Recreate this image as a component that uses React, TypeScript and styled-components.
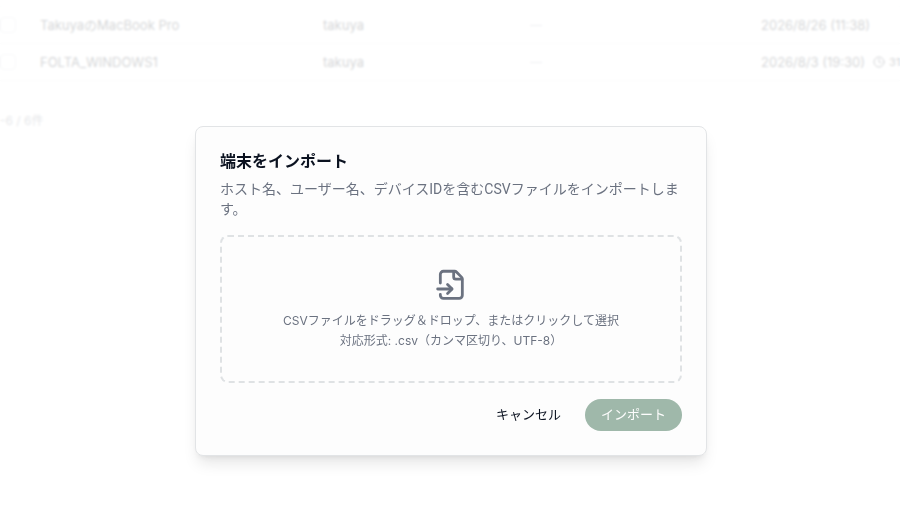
import { useState } from "react";
import styled, { createGlobalStyle } from "styled-components";
import { Clock } from "lucide-react";

const GlobalStyle = createGlobalStyle`
  * {
    box-sizing: border-box;
  }

  body {
    margin: 0;
    background: #ffffff;
    color: #0b1220;
    font-family: Inter, "Noto Sans CJK JP", sans-serif;
    font-size: 13px;
    line-height: 20px;
    overflow: hidden;
  }
`;

const Page = styled.main`
  min-height: 100vh;
  padding-top: 6px;
`;

const DeviceTable = styled.table`
  width: 100%;
  table-layout: fixed;
  border-collapse: collapse;
  border-top: 1px solid #f3f4f6;
`;

const Row = styled.tr`
  height: 37px;
  border-bottom: 1px solid #e5e7eb;
`;

const Cell = styled.td<{ $width?: string; $muted?: boolean }>`
  width: ${({ $width }) => $width || "auto"};
  padding: 0;
  color: ${({ $muted }) => ($muted ? "#9ca3af" : "inherit")};
  font-size: ${({ $muted }) => ($muted ? "12px" : "inherit")};
  white-space: nowrap;
`;

const Check = styled.input`
  display: block;
  appearance: none;
  width: 16px;
  height: 16px;
  margin: 0;
  border: 1px solid #d1d5db;
  border-radius: 4px;
`;

const Seen = styled.div`
  display: flex;
  align-items: center;
  gap: 8px;
`;

const Ago = styled.span`
  display: flex;
  align-items: center;
  gap: 4px;
  font-size: 11px;
`;

const Pager = styled.p`
  margin: 30px 0 0;
  color: #6b7280;
  font-size: 12px;
`;

const Overlay = styled.div`
  position: fixed;
  inset: 0;
  display: flex;
  justify-content: center;
  align-items: flex-start;
  padding: 126px 14px 16px 16px;
  background: rgba(255, 255, 255, 0.82);
  backdrop-filter: blur(0.8px);
`;

const Dialog = styled.section`
  width: 100%;
  max-width: 512px;
  padding: 24px;
  background: #fdfdfd;
  border: 1px solid #e2e4e6;
  border-radius: 8px;
  box-shadow:
    0 10px 15px -3px rgba(0, 0, 0, 0.1),
    0 4px 6px -4px rgba(0, 0, 0, 0.1);
`;

const Title = styled.h2`
  margin: 0 0 8px;
  font-size: 16px;
  font-weight: 600;
  line-height: 20px;
`;

const Description = styled.p`
  margin: 0 0 16px;
  color: #6b7280;
  font-family: Roboto, "Noto Sans CJK JP", sans-serif;
  font-size: 14px;
`;

const DropZone = styled.label`
  display: flex;
  flex-direction: column;
  align-items: center;
  padding: 32px 32px 30px;
  border: 2px dashed #dfe2e4;
  border-radius: 8px;
  color: #6b7280;
  font-size: 12px;
  text-align: center;
  cursor: pointer;

  svg {
    margin-bottom: 10px;
  }
`;

const Actions = styled.div`
  display: flex;
  justify-content: flex-end;
  gap: 8px;
  margin-top: 16px;
`;

const Button = styled.button<{ $primary?: boolean }>`
  height: 32px;
  padding: 0 16px 2px;
  border: none;
  border-radius: 16px;
  background: ${({ $primary }) => ($primary ? "#9fb8aa" : "transparent")};
  color: ${({ $primary }) => ($primary ? "#fdfdfd" : "#0b1220")};
  font: inherit;
  cursor: ${({ $primary }) => ($primary ? "default" : "pointer")};
`;

const ImportIcon = () => (
  <svg
    width="32"
    height="32"
    viewBox="0 0 24 24"
    fill="none"
    stroke="currentColor"
    strokeWidth="2.1"
    strokeLinecap="round"
    strokeLinejoin="round"
    aria-hidden="true"
  >
    <path d="M4 10.5V4a2.3 2.3 0 0 1 2.3-2.3h8.4a2 2 0 0 1 1.4.6l3.8 3.8a2 2 0 0 1 .6 1.4v12.2a2.3 2.3 0 0 1-2.3 2.3H6.3A2.3 2.3 0 0 1 4 19.7v-.6" />
    <path d="M14 1.9v4.1a1.6 1.6 0 0 0 1.6 1.6h4.6" />
    <path d="M2 15h10.6" />
    <path d="m9.4 18.4 3.4-3.4-3.4-3.4" />
  </svg>
);

const devices = [
  { name: "TakuyaのMacBook Pro", user: "takuya", seen: "2026/8/26 (11:38)" },
  {
    name: "FOLTA_WINDOWS1",
    user: "takuya",
    seen: "2026/8/3 (19:30)",
    ago: "31",
  },
];

function App() {
  const [open, setOpen] = useState(true);

  return (
    <>
      <GlobalStyle />
      <Page>
        <DeviceTable>
          <tbody>
            {devices.map((device) => (
              <Row key={device.name}>
                <Cell $width="40px">
                  <Check type="checkbox" aria-label={device.name} />
                </Cell>
                <Cell>{device.name}</Cell>
                <Cell $width="23%">{device.user}</Cell>
                <Cell $width="231px" $muted>
                  —
                </Cell>
                <Cell $width="139px">
                  <Seen>
                    {device.seen}
                    {device.ago && (
                      <Ago>
                        <Clock size={12} />
                        {device.ago}
                      </Ago>
                    )}
                  </Seen>
                </Cell>
              </Row>
            ))}
          </tbody>
        </DeviceTable>
        <Pager>-6 / 6件</Pager>
      </Page>

      {open && (
        <Overlay>
          <Dialog role="dialog" aria-modal="true" aria-labelledby="import-title">
            <Title id="import-title">端末をインポート</Title>
            <Description>
              ホスト名、ユーザー名、デバイスIDを含むCSVファイルをインポートします。
            </Description>
            <DropZone>
              <ImportIcon />
              <span>CSVファイルをドラッグ＆ドロップ、またはクリックして選択</span>
              <span>対応形式: .csv（カンマ区切り、UTF-8）</span>
              <input type="file" accept=".csv" hidden />
            </DropZone>
            <Actions>
              <Button type="button" onClick={() => setOpen(false)}>
                キャンセル
              </Button>
              <Button type="button" $primary disabled>
                インポート
              </Button>
            </Actions>
          </Dialog>
        </Overlay>
      )}
    </>
  );
}

export default App;
